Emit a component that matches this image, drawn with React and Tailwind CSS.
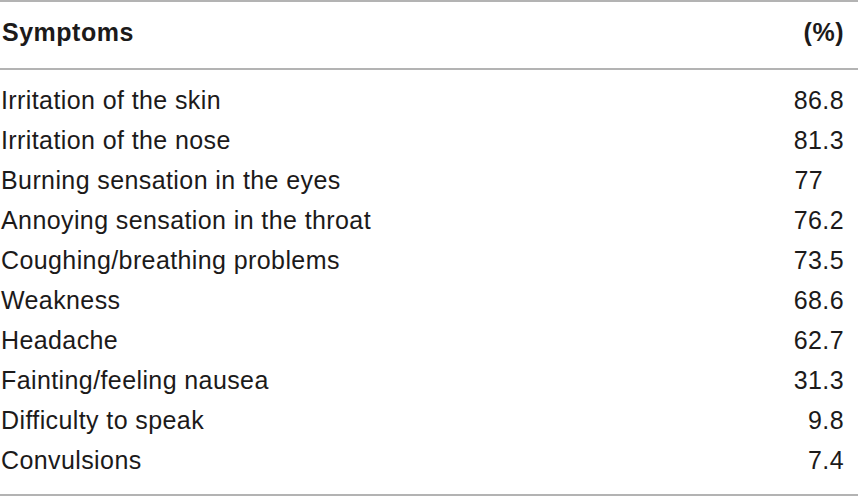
import React from "react";

const rows = [
  { name: "Irritation of the skin", value: "86.8" },
  { name: "Irritation of the nose", value: "81.3" },
  { name: "Burning sensation in the eyes", value: "77", shift: true },
  { name: "Annoying sensation in the throat", value: "76.2" },
  { name: "Coughing/breathing problems", value: "73.5" },
  { name: "Weakness", value: "68.6" },
  { name: "Headache", value: "62.7" },
  { name: "Fainting/feeling nausea", value: "31.3" },
  { name: "Difficulty to speak", value: "9.8" },
  { name: "Convulsions", value: "7.4" },
];

function App() {
  return (
    <div
      className="w-[858px] h-[496px] bg-white text-[#1c1a1a] overflow-hidden"
      style={{ fontFamily: '"Liberation Sans", Arial, sans-serif' }}
    >
      {/* TOP RULE */}
      <div className="h-[2px] bg-[#b3b3b3]" />

      {/* HEADER */}
      <div className="flex justify-between pl-[2px] pr-[14px] pt-[10px] pb-[16px] text-[25px] leading-[40px] font-bold tracking-[0.5px]">
        <span>Symptoms</span>
        <span>(%)</span>
      </div>

      <div className="h-[2px] bg-[#b3b3b3]" />

      {/* ROWS */}
      <div className="pt-[10px] pb-[14px]">
        {rows.map((row) => (
          <div
            key={row.name}
            className="flex justify-between h-[40px] pl-[1px] pr-[14px] text-[25px] leading-[40px] tracking-[0.4px]"
          >
            <span>{row.name}</span>
            <span className={row.shift ? "pr-[21px]" : ""}>{row.value}</span>
          </div>
        ))}
      </div>

      {/* BOTTOM RULE */}
      <div className="h-[2px] bg-[#b3b3b3]" />
    </div>
  );
}

export default App;
